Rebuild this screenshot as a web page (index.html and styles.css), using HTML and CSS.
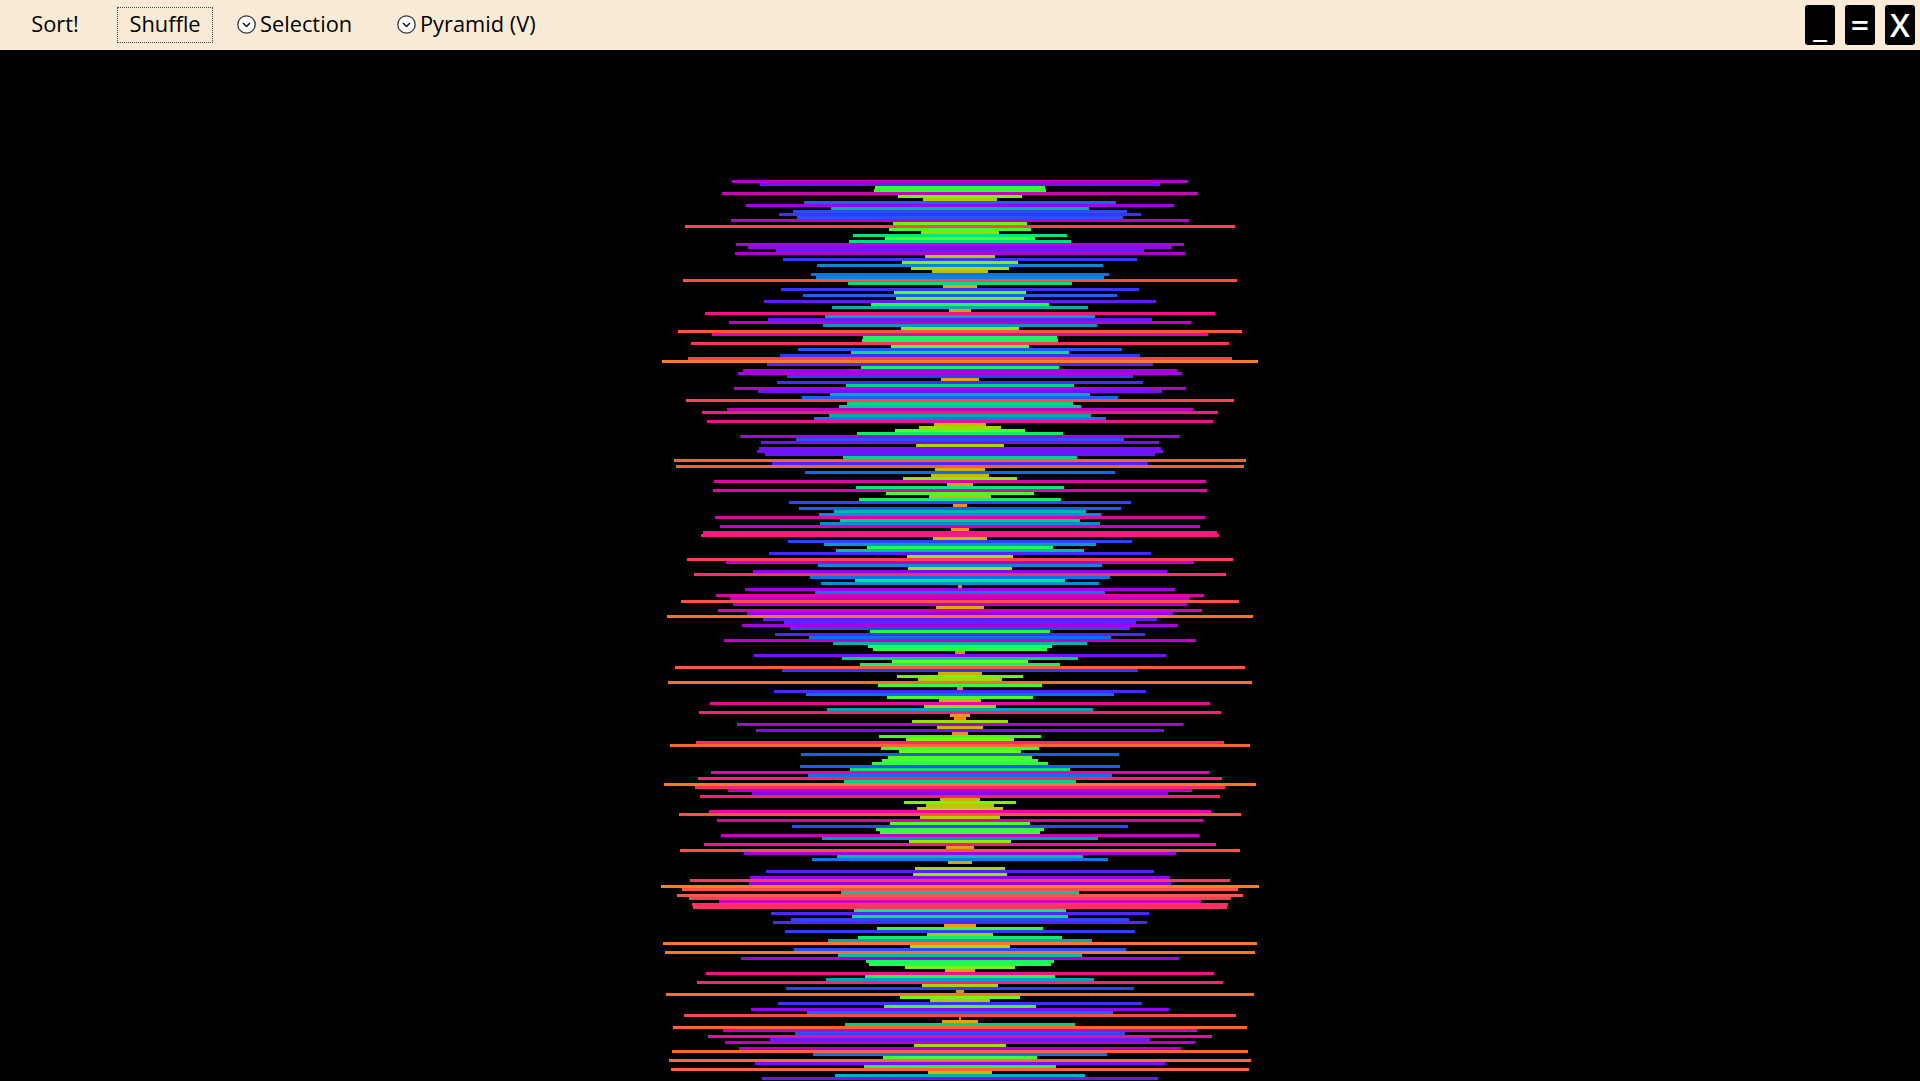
FILE: index.html
```html
<!DOCTYPE html>
<html lang="en">
<head>
<meta charset="utf-8">
<title>Sorting</title>
<link rel="stylesheet" href="styles.css">
</head>
<body>
<header class="toolbar">
  <button class="action action-sort" type="button">Sort!</button>
  <button class="action action-shuffle" type="button">Shuffle</button>
  <div class="combo combo-algo">
    <svg class="chevron" viewBox="0 0 19 19" aria-hidden="true"><circle cx="9.5" cy="9.5" r="8.7"/><path d="M6 8l3.5 3.5L13 8"/></svg>
    <span>Selection</span>
  </div>
  <div class="combo combo-view">
    <svg class="chevron" viewBox="0 0 19 19" aria-hidden="true"><circle cx="9.5" cy="9.5" r="8.7"/><path d="M6 8l3.5 3.5L13 8"/></svg>
    <span>Pyramid (V)</span>
  </div>
  <div class="window-buttons">
    <button class="win-btn" type="button">_</button>
    <button class="win-btn" type="button">=</button>
    <button class="win-btn" type="button">X</button>
  </div>
</header>
<main class="stage" id="stage"></main>
<script src="script.js"></script>
</body>
</html>
```

FILE: styles.css
```css
* { box-sizing: border-box; }
html, body { margin: 0; height: 100%; overflow: hidden; background: #000; }
body { display: flex; flex-direction: column; font-family: "Open Sans", "Noto Sans", sans-serif; }

.toolbar {
  flex: none;
  height: 50px;
  background: #faebd7;
  display: flex;
  align-items: center;
  color: #000;
  font-size: 21.8px;
  font-weight: 500;
}
.action {
  font: inherit;
  color: inherit;
  background: none;
  border: 1px dotted transparent;
  height: 36px;
  padding: 0 0 3px;
  text-align: center;
}
.action-sort { width: 96px; margin-left: 7px; margin-right: 14px; }
.action-shuffle { width: 96px; border-color: #444; margin-right: 24px; }

.combo { display: flex; align-items: center; gap: 4px; height: 36px; padding-bottom: 1px; }
.combo span { margin-top: -2px; }
.combo-algo { width: 160px; }
.chevron { width: 19px; height: 19px; flex: none; }
.chevron circle { fill: #fff; stroke: #333; stroke-width: 1.3; }
.chevron path { fill: none; stroke: #111; stroke-width: 1.5; }

.window-buttons { margin-left: auto; display: flex; gap: 10px; padding-right: 5px; }
.win-btn {
  width: 30px;
  height: 40px;
  padding: 0;
  background: #000;
  color: #fff;
  border: 0;
  border-radius: 3px;
  font: inherit;
  font-size: 32px;
  font-weight: 600;
  line-height: 40px;
}

.stage {
  flex: 1;
  min-height: 0;
  overflow: hidden;
  background: #000;
  padding-top: 130px;
  display: flex;
  flex-direction: column;
  align-items: center;
}
.bar { flex: none; height: 3px; }
```

FILE: script.js
```js
var widths = [
456,400,170,172,476,124,74,312,428,258,334,362,326,458,134,550,142,78,214,150,222,448,424,368,450,70,354,116,286,98,56,298,288,554,224,34,358,132,314,128,392,178,256,22,510,270,384,462,274,118,564,496,194,196,538,138,324,218,360,544,
596,386,198,434,444,346,38,366,228,452,404,260,316,548,226,242,466,516,262,292,506,52,82,130,206,440,328,398,88,402,406,390,234,572,376,568,50,310,58,114,492,26,208,494,148,62,202,342,14,322,252,282,490,240,280,480,18,514,518,54,344,272,186,248,
382,106,546,468,284,104,414,532,300,210,278,4,430,290,488,460,558,454,48,484,426,586,394,352,436,340,180,370,302,472,254,184,174,10,412,236,136,200,570,356,44,126,84,584,164,6,372,308,146,42,500,72,266,522,20,12,96,446,46,408,16,162,108,
528,580,158,122,318,144,156,176,320,220,498,304,524,232,592,530,464,416,520,40,112,68,86,502,562,80,486,140,336,168,160,478,276,102,512,28,560,432,246,296,24,0,90,388,94,420,540,422,598,556,238,566,542,482,536,534,212,
378,216,338,374,32,166,350,66,204,264,594,100,332,590,244,438,188,182,110,30,508,190,268,526,76,348,8,588,120,60,364,152,418,306,552,2,36,230,574,474,330,504,380,470,92,442,576,294,154,582,410,192,578,64,250,396
];
var palette = [
[0,235,125,30],[22,240,150,20],[50,205,180,0],[70,180,200,0],[100,150,230,0],[130,90,255,30],[170,50,255,60],
[200,20,240,110],[230,0,210,140],[260,0,170,180],[290,0,130,220],[320,30,90,250],[360,60,50,255],[400,110,20,250],
[430,160,0,230],[470,190,0,190],[500,230,10,160],[520,250,30,120],[550,255,70,80],[598,255,125,35]
];
function colorFor(w) {
  for (var i = 1; i < palette.length; i++) {
    if (w <= palette[i][0]) {
      var a = palette[i - 1], b = palette[i], t = (w - a[0]) / (b[0] - a[0]);
      return "rgb(" + [1, 2, 3].map(function (k) { return Math.round(a[k] + (b[k] - a[k]) * t); }).join(",") + ")";
    }
  }
  return "#f80";
}
var stage = document.getElementById("stage");
widths.forEach(function (w) {
  var bar = document.createElement("div");
  bar.className = "bar";
  bar.style.width = w + "px";
  bar.style.background = colorFor(w);
  stage.appendChild(bar);
});
```
